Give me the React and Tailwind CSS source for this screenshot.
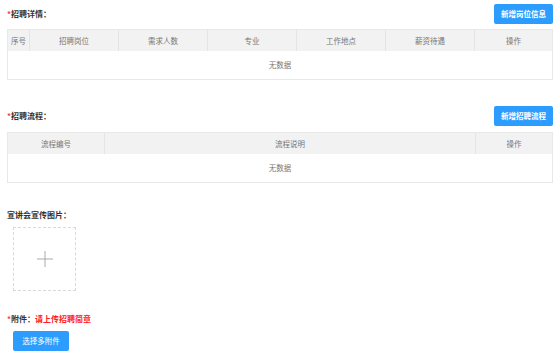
const font = { fontFamily: '"Noto Sans CJK SC", "Noto Sans", sans-serif' };

const jobColumns = [
    { label: "序号", width: "w-[22px]" },
    { label: "招聘岗位", width: "flex-1" },
    { label: "需求人数", width: "flex-1" },
    { label: "专业", width: "flex-1" },
    { label: "工作地点", width: "flex-1" },
    { label: "薪资待遇", width: "flex-1" },
    { label: "操作", width: "w-[77px]" }
];

const flowColumns = [
    { label: "流程编号", width: "w-[97px]" },
    { label: "流程说明", width: "flex-1" },
    { label: "操作", width: "w-[76px]" }
];

const SectionHeader = ({ title, button }) => (
    <div className="flex h-[20px] items-center justify-between">
        <div className="text-[8px] font-bold text-[#333]">
            <span className="text-[#ff3b30]">*</span>
            {title}：
        </div>
        <button className="h-[20px] w-[59px] rounded-[2px] bg-[#2d9cff] text-[7.5px] font-bold text-white">
            {button}
        </button>
    </div>
);

const EmptyTable = ({ columns }) => (
    <div className="border border-[#e8e8e8]">
        <div className="flex h-[21px] bg-[#f2f2f2]">
            {columns.map((col, i) => (
                <div
                    key={col.label}
                    className={`${col.width} flex items-center justify-center text-[7.5px] text-[#777] ${
                        i < columns.length - 1 ? "border-r border-[#e4e4e4]" : ""
                    }`}
                >
                    {col.label}
                </div>
            ))}
        </div>
        <div className="flex h-[28px] items-center justify-center text-[7.5px] text-[#777]">无数据</div>
    </div>
);

const App = () => {
    return (
        <div className="min-h-[353px] w-[554px] bg-white pl-[7px] pr-[1px] pt-[4px]" style={font}>
            <SectionHeader title="招聘详情" button="新增岗位信息" />
            <div className="mt-[5px]">
                <EmptyTable columns={jobColumns} />
            </div>

            <div className="mt-[26px]">
                <SectionHeader title="招聘流程" button="新增招聘流程" />
            </div>
            <div className="mt-[6px]">
                <EmptyTable columns={flowColumns} />
            </div>

            <div className="mt-[26px] text-[8px] font-bold text-[#333]">宣讲会宣传图片：</div>
            <div className="ml-[6px] mt-[6px] flex h-[64px] w-[63px] items-center justify-center border border-dashed border-[#d9d9d9]">
                <svg width="16" height="16" viewBox="0 0 16 16">
                    <path d="M8 0v16M0 8h16" stroke="#aaa" strokeWidth="1" />
                </svg>
            </div>

            <div className="mt-[22px] text-[8px] font-bold text-[#333]">
                <span className="text-[#ff3b30]">*</span>附件：
                <span className="text-[#ff2020]">请上传招聘简章</span>
            </div>
            <button className="ml-[6px] mt-[5px] h-[20px] w-[56px] rounded-[2px] bg-[#2d9cff] text-[7.5px] text-white">
                选择多附件
            </button>
        </div>
    );
};

export default App;
